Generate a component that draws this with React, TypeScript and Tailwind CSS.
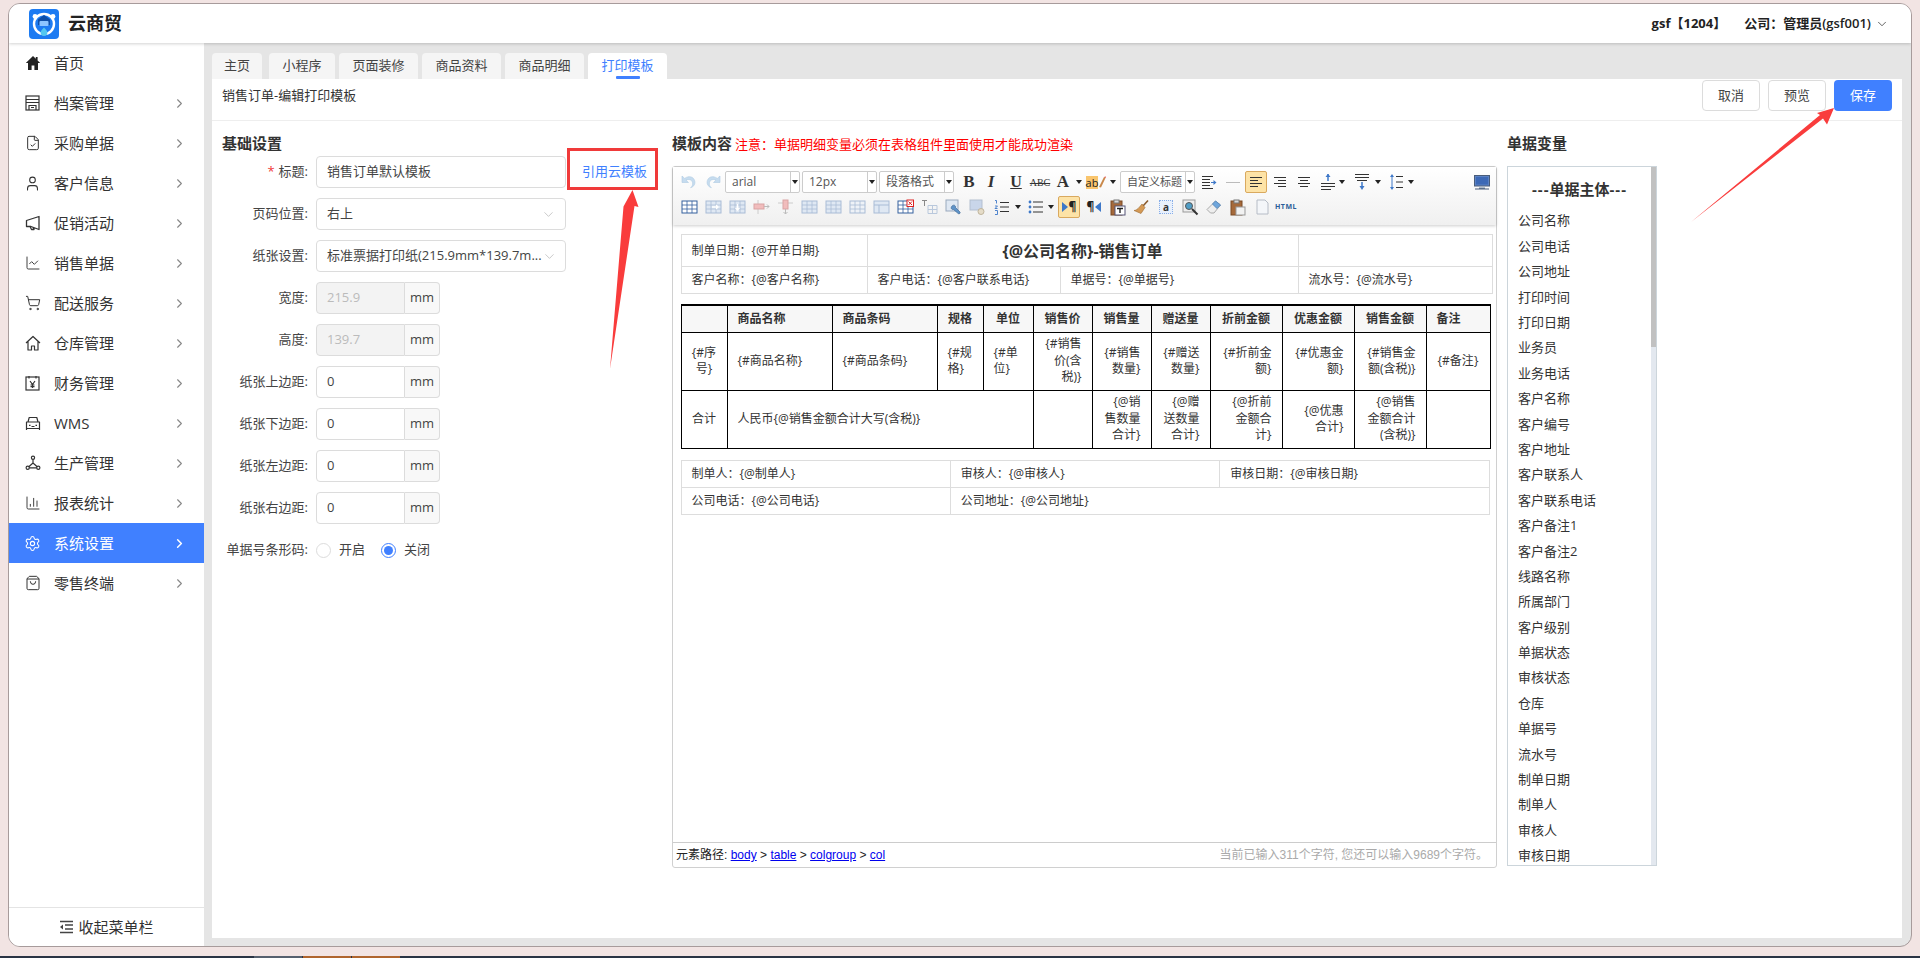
import type { ReactNode } from 'react';
import {
  ChevronDown,
  ChevronRight,
  ChartColumn,
  ChartLine,
  FileCheck,
  Settings,
  ShoppingBag,
  ShoppingCart,
  User,
} from 'lucide-react';

// full-width colon used by the page's labels
const C = '\uFF1A';

const menu: { label: string; icon: ReactNode; active?: boolean; noArrow?: boolean }[] = [
  { label: '首页', icon: <HomeIcon />, noArrow: true },
  { label: '档案管理', icon: <StoreIcon /> },
  { label: '采购单据', icon: <FileCheck size={16} strokeWidth={1.5} /> },
  { label: '客户信息', icon: <User size={17} strokeWidth={1.5} /> },
  { label: '促销活动', icon: <HornIcon /> },
  { label: '销售单据', icon: <ChartLine size={16} strokeWidth={1.4} /> },
  { label: '配送服务', icon: <ShoppingCart size={16} strokeWidth={1.5} /> },
  { label: '仓库管理', icon: <HouseIcon /> },
  { label: '财务管理', icon: <YenIcon /> },
  { label: 'WMS', icon: <CarIcon /> },
  { label: '生产管理', icon: <NodesIcon /> },
  { label: '报表统计', icon: <ChartColumn size={16} strokeWidth={1.4} /> },
  { label: '系统设置', icon: <Settings size={17} strokeWidth={1.5} />, active: true },
  { label: '零售终端', icon: <ShoppingBag size={16} strokeWidth={1.5} /> },
];

const tabs = ['主页', '小程序', '页面装修', '商品资料', '商品明细', '打印模板'];

const variables = [
  '公司名称', '公司电话', '公司地址', '打印时间', '打印日期', '业务员', '业务电话', '客户名称', '客户编号',
  '客户地址', '客户联系人', '客户联系电话', '客户备注1', '客户备注2', '线路名称', '所属部门', '客户级别',
  '单据状态', '审核状态', '仓库', '单据号', '流水号', '制单日期', '制单人', '审核人', '审核日期',
];

function HomeIcon() {
  return (
    <svg width="16" height="16" viewBox="0 0 16 16" fill="#222">
      <path d="M8 1 .8 8h2.2v7h3.6v-4.6h2.8V15H13V8h2.2L12.6 5.4V2h-1.8v1.7z" />
    </svg>
  );
}
function StoreIcon() {
  return (
    <svg width="15" height="16" viewBox="0 0 15 16" fill="none" stroke="#333" strokeWidth="1.2">
      <rect x="1" y="1" width="13" height="14" />
      <path d="M1 4.5h13M1 7.5h13M4 15v-4.5h7V15M6 12.5h3" />
    </svg>
  );
}
function HornIcon() {
  return (
    <svg width="16" height="16" viewBox="0 0 16 16" fill="none" stroke="#333" strokeWidth="1.3" strokeLinejoin="round">
      <path d="M14 1.5v13L6 11.5H1.5v-6L14 1.5zM5 11.5l1.5 3h2.5l-.8-2" />
    </svg>
  );
}
function HouseIcon() {
  return (
    <svg width="16" height="16" viewBox="0 0 16 16" fill="none" stroke="#333" strokeWidth="1.2" strokeLinejoin="round">
      <path d="M1 8 8 1.5 15 8M3 6.5V15h3.5v-4h3v4H13V6.5" />
    </svg>
  );
}
function YenIcon() {
  return (
    <svg width="15" height="16" viewBox="0 0 15 16" fill="none" stroke="#333" strokeWidth="1.2">
      <rect x="1" y="2" width="13" height="13" />
      <path d="M4 1v2.5M11 1v2.5M5 6l2.5 3.5L10 6M7.5 9.5V13M5.5 10h4M5.5 11.7h4" />
    </svg>
  );
}
function CarIcon() {
  return (
    <svg width="16" height="16" viewBox="0 0 16 16" fill="none" stroke="#333" strokeWidth="1.2" strokeLinejoin="round">
      <path d="M3 7 4.2 2.5h7.6L13 7M1.5 7h13v6.5h-13zM1.5 13.5V15M14.5 13.5V15M4 10.3h1.5M10.5 10.3H12M6.5 11.5h3" />
    </svg>
  );
}
function NodesIcon() {
  return (
    <svg width="16" height="16" viewBox="0 0 16 16" fill="none" stroke="#333" strokeWidth="1.2">
      <circle cx="8" cy="2.8" r="1.6" />
      <circle cx="2.7" cy="12.8" r="1.6" />
      <circle cx="13.3" cy="12.8" r="1.6" />
      <path d="M8 4.4V8M8 8l-4.2 3.7M8 8l4.2 3.7M4.3 12.8h7.4" />
    </svg>
  );
}

function Logo() {
  return (
    <svg width="30" height="30" viewBox="0 0 30 30">
      <rect width="30" height="30" rx="4" fill="#1d7bf2" />
      <circle cx="15" cy="15" r="10" fill="none" stroke="#fff" strokeWidth="2.4" />
      <circle cx="6" cy="7.5" r="2.4" fill="#fff" />
      <circle cx="24" cy="7.5" r="2.4" fill="#fff" />
      <path d="M9 10.5 15 6l6 4.5v5.5H9z" fill="#0f4fa8" />
      <rect x="10.5" y="12" width="9" height="5" rx="1" fill="#8cc4ff" />
      <path d="M15 18.5c2 2 3.4 3.4 3.4 5a3.4 3.4 0 0 1-6.8 0c0-1.6 1.4-3 3.4-5z" fill="#53c7f0" />
    </svg>
  );
}

/* --- editor toolbar icons --- */
function Lines({ rows, color = '#333', children }: { rows: [number, number, number][]; color?: string; children?: ReactNode }) {
  return (
    <svg width="16" height="16" viewBox="0 0 16 16" stroke={color} strokeWidth="1.1">
      {rows.map(([a, b, y]) => (
        <path key={a + '-' + b + '-' + y} d={'M' + a + ' ' + y + '.5H' + b} />
      ))}
      {children}
    </svg>
  );
}
function Caret() {
  return <span className="h-0 w-0 border-x-[3px] border-t-[4px] border-x-transparent border-t-[#222]" />;
}
function Arrow({ flip }: { flip?: boolean }) {
  return (
    <svg width="16" height="16" viewBox="0 0 16 16" className={flip ? '-scale-x-100' : ''}>
      <path d="M1 2v6.5h6.5L5 6.2c2.6-1.6 6-.4 6.6 2.5.4 2-.4 3.6-2 5 3.6-1 5-4.2 4-7.2C12.4 2.6 7.8 1.4 3.7 4.4z" fill="#c6dcef" stroke="#aecbe2" strokeWidth=".6" />
    </svg>
  );
}
function Grid({ color = '#a9bcd6', fill = '#dfe8f3', extra }: { color?: string; fill?: string; extra?: ReactNode }) {
  return (
    <svg width="17" height="16" viewBox="0 0 17 16" fill="none">
      <rect x="1" y="2" width="15" height="12" fill={fill} stroke={color} />
      <path d="M1 6h15M1 10h15M6 2v12M11 2v12" stroke={color} strokeWidth=".8" />
      {extra}
    </svg>
  );
}
function Combo({ text, className = '' }: { text: string; className?: string }) {
  return (
    <div className={'flex h-[22px] w-[75px] shrink-0 items-center rounded-[2px] border border-[#ccc] bg-white text-[12px] text-[#555] ' + className}>
      <span className="flex-1 overflow-hidden whitespace-nowrap pl-[6px]">{text}</span>
      <span className="flex h-full w-[9px] items-center justify-center border-l border-[#ccc]">
        <Caret />
      </span>
    </div>
  );
}
function Slot({ w, children, className = '' }: { w: string; children?: ReactNode; className?: string }) {
  return <span className={'flex shrink-0 items-center justify-center ' + w + ' ' + className}>{children}</span>;
}
function Active({ children, className = '' }: { children: ReactNode; className?: string }) {
  return (
    <span className={'flex h-[22px] w-[22px] shrink-0 items-center justify-center rounded-[2px] border border-[#d9a95f] bg-[#fde3a7] ' + className}>
      {children}
    </span>
  );
}
const serif = "text-[#333] [font-family:'Liberation_Serif',serif]";

function Toolbar() {
  return (
    <div className="relative flex h-[58px] shrink-0 flex-col bg-gradient-to-b from-white to-[#f0f0f0] pl-[4px] shadow-[0_1px_3px_rgba(0,0,0,.2)]">
      <div className="mt-[4px] flex h-[22px] items-center pr-[2px]">
        <Slot w="w-[24px]"><Arrow /></Slot>
        <Slot w="w-[24px]"><Arrow flip /></Slot>
        <Combo text="arial" />
        <Combo text="12px" className="ml-[2px]" />
        <Combo text="段落格式" className="ml-[2px]" />
        <Slot w="w-[22px]" className={'ml-[4px] text-[17px] leading-[22px] font-bold ' + serif}>B</Slot>
        <Slot w="w-[22px]" className={'text-[17px] leading-[22px] font-bold italic ' + serif}>I</Slot>
        <Slot w="w-[28px]" className={'text-[16px] leading-[22px] font-bold underline ' + serif}>U</Slot>
        <Slot w="w-[20px]" className={'text-[10px] line-through ' + serif}>ABC</Slot>
        <Slot w="w-[26px]" className={'text-[17px] leading-[22px] font-bold ' + serif}>A</Slot>
        <Slot w="w-[6px]"><Caret /></Slot>
        <Slot w="w-[28px]">
          <span className="bg-[#f9c56d] text-[11px] leading-[13px] text-[#222]">ab</span>
          <svg width="8" height="14" viewBox="0 0 8 14"><path d="M1 12 6 2l1.5 1L3 12.5z" fill="#c9884a" /><path d="M6 2l1.5 1 .5-1.5z" fill="#d33" /></svg>
        </Slot>
        <Slot w="w-[6px]"><Caret /></Slot>
        <Combo text="自定义标题" className="ml-[4px] !text-[11px]" />
        <Slot w="w-[28px]">
          <Lines rows={[[1, 12, 2], [1, 9, 5], [1, 9, 8], [1, 9, 11], [1, 12, 14]]}>
            <path d="M10 8.5h3" stroke="#3e78c8" /><path d="M12.5 6v5l3-2.5z" fill="#3e78c8" stroke="none" />
          </Lines>
        </Slot>
        <Slot w="w-[20px]"><Lines color="#bbb" rows={[[1, 15, 8]]} /></Slot>
        <Active className="ml-[2px]"><Lines rows={[[2, 14, 3], [2, 10, 6], [2, 14, 9], [2, 10, 12]]} /></Active>
        <Slot w="w-[26px]"><Lines rows={[[2, 14, 3], [6, 14, 6], [2, 14, 9], [6, 14, 12]]} /></Slot>
        <Slot w="w-[22px]"><Lines rows={[[2, 14, 3], [4, 12, 6], [2, 14, 9], [4, 12, 12]]} /></Slot>
        <Slot w="w-[22px]" className="ml-[2px]">
          <svg width="16" height="18" viewBox="0 0 16 18" stroke="#333"><path d="M8 1v7" stroke="#3e78c8" strokeWidth="1.5" /><path d="M5.5 4 8 .8 10.5 4z" fill="#3e78c8" stroke="none" /><path d="M1 10.5h14M1 13.5h14M1 16.5h10" /></svg>
        </Slot>
        <Slot w="w-[6px]"><Caret /></Slot>
        <Slot w="w-[27px]" className="ml-[3px]">
          <svg width="16" height="18" viewBox="0 0 16 18" stroke="#333"><path d="M1 1.5h14M1 4.5h14M3 7.5h10" /><path d="M8 9v6" stroke="#3e78c8" strokeWidth="1.5" /><path d="M5.5 13 8 17l2.5-4z" fill="#3e78c8" stroke="none" /></svg>
        </Slot>
        <Slot w="w-[6px]"><Caret /></Slot>
        <Slot w="w-[25px]" className="ml-[2px]">
          <svg width="16" height="18" viewBox="0 0 16 18" stroke="#333"><path d="M2 4 4 1l2 3zM2 14l2 3 2-3z" fill="#3e78c8" stroke="none" /><path d="M4 4v10" stroke="#3e78c8" strokeWidth="1" /><path d="M8 3.5h7M8 9h7M8 14.5h7" stroke="#333" /></svg>
        </Slot>
        <Slot w="w-[6px]"><Caret /></Slot>
        <Slot w="w-[24px]" className="ml-auto">
          <svg width="16" height="15" viewBox="0 0 16 15"><rect x=".5" y=".5" width="15" height="10.5" fill="#5b82c4" stroke="#4a5d7a" /><rect x="2" y="2" width="12" height="7.5" fill="#3d69b6" /><path d="M5 12.5h6v1.5H5z" fill="#6d8199" /><path d="M1 14h14" stroke="#4a5d7a" /></svg>
        </Slot>
      </div>
      <div className="mt-[3px] flex h-[22px] items-center">
        <Slot w="w-[24px]"><Grid color="#35609e" fill="#fff" /></Slot>
        <Slot w="w-[24px]"><Grid extra={<path d="M7 8h6M11 6l2 2-2 2" stroke="#fff" strokeWidth="1.3" />} /></Slot>
        <Slot w="w-[24px]"><Grid extra={<path d="M8.5 5v6M6.5 9l2 2 2-2" stroke="#fff" strokeWidth="1.3" />} /></Slot>
        <Slot w="w-[24px]">
          <svg width="17" height="16" viewBox="0 0 17 16" fill="none"><path d="M5 1v14" stroke="#ccc" /><rect x="1" y="5" width="10" height="5" fill="#f1bcbc" stroke="#d9a3a3" /><path d="M11 7.5h5M14 5.5l2 2-2 2" stroke="#bbb" /></svg>
        </Slot>
        <Slot w="w-[24px]">
          <svg width="17" height="16" viewBox="0 0 17 16" fill="none"><path d="M1 4h15" stroke="#ccc" /><rect x="6" y="1" width="5" height="9" fill="#f1bcbc" stroke="#d9a3a3" /><path d="M8.5 10v5M6.5 13l2 2 2-2" stroke="#bbb" /></svg>
        </Slot>
        <Slot w="w-[24px]"><Grid /></Slot>
        <Slot w="w-[24px]"><Grid /></Slot>
        <Slot w="w-[24px]"><Grid fill="#eef2f7" /></Slot>
        <Slot w="w-[24px]">
          <svg width="17" height="16" viewBox="0 0 17 16" fill="none"><rect x="1" y="2" width="15" height="12" fill="#dfe8f3" stroke="#a9bcd6" /><path d="M1 6h15M6 6v8" stroke="#a9bcd6" /></svg>
        </Slot>
        <Slot w="w-[24px]">
          <Grid color="#35609e" fill="#fff" extra={<g><rect x="10" y="1" width="6.5" height="6.5" fill="#fff" stroke="#d22" /><path d="M11.5 2.5l3.5 3.5M15 2.5 11.5 6" stroke="#d22" /></g>} />
        </Slot>
        <Slot w="w-[24px]">
          <svg width="17" height="16" viewBox="0 0 17 16" fill="none"><path d="M1 1.5h5M3.5 1.5V7" stroke="#888" /><path d="M7 6.5h9v8H7zM7 10.5h9M11.5 6.5v8" stroke="#b9c8dc" /></svg>
        </Slot>
        <Slot w="w-[24px]">
          <svg width="17" height="17" viewBox="0 0 17 17" fill="none"><rect x="1" y="1" width="12" height="11" fill="#dfe8f3" stroke="#9aa9bd" /><path d="M7 7c2-2 4 0 3.5 1.500L15 13c.8 1-.8 2.500-1.800 1.600L8.500 10.500C6.800 11 5.200 9 7 7z" fill="#5f93c8" stroke="#37618f" strokeWidth=".6" /></svg>
        </Slot>
        <Slot w="w-[24px]">
          <svg width="17" height="17" viewBox="0 0 17 17" fill="none"><rect x="1" y="1" width="12" height="10" fill="#c9d6ea" stroke="#b3bfd0" /><circle cx="12" cy="12.5" r="3" fill="#e5dcc8" stroke="#bfb49c" /></svg>
        </Slot>
        <Slot w="w-[26px]">
          <svg width="16" height="16" viewBox="0 0 16 16" fill="none"><path d="M1 1.5h1.500v3M1 7h2.500L1 9.500h2.500M1 11.500h2.500v4H1" stroke="#3e78c8" strokeWidth=".9" /><path d="M6 3.500h9M6 8h9M6 12.500h9" stroke="#333" /></svg>
        </Slot>
        <Slot w="w-[6px]"><Caret /></Slot>
        <Slot w="w-[24px]" className="ml-[3px]">
          <svg width="16" height="16" viewBox="0 0 16 16" fill="none"><circle cx="2" cy="3" r="1.4" fill="#3e78c8" /><circle cx="2" cy="8" r="1.4" fill="#3e78c8" /><circle cx="2" cy="13" r="1.4" fill="#3e78c8" /><path d="M5 3h10M5 8h10M5 13h10" stroke="#333" /></svg>
        </Slot>
        <Slot w="w-[6px]"><Caret /></Slot>
        <Active className="ml-[4px] text-[12px] font-bold text-[#222]">
          <span className="mr-[1px] h-0 w-0 border-y-[5px] border-l-[6px] border-y-transparent border-l-[#3e78c8]" />¶
        </Active>
        <Slot w="w-[28px]" className="text-[12px] font-bold text-[#222]">
          ¶<span className="ml-[1px] h-0 w-0 border-y-[5px] border-r-[6px] border-y-transparent border-r-[#3e78c8]" />
        </Slot>
        <Slot w="w-[20px]">
          <svg width="16" height="17" viewBox="0 0 16 17" fill="none"><rect x="1" y="2" width="11" height="14" fill="#a5693a" stroke="#7a4a24" /><rect x="4" y="1" width="5" height="3" fill="#d8d8d8" stroke="#777" /><rect x="5" y="7" width="10" height="9" fill="#fff" stroke="#557" /><path d="M7 9.5h6M10 9.5V14" stroke="#222" strokeWidth="1.4" /></svg>
        </Slot>
        <Slot w="w-[26px]">
          <svg width="17" height="16" viewBox="0 0 17 16" fill="none"><path d="M10 7 15 1.5" stroke="#8a5a2b" strokeWidth="1.6" /><path d="M9 5 12 8.5 8 14.5 1 11.5c3 0 5.5-3.5 8-6.5z" fill="#d59a55" stroke="#9c6a30" strokeWidth=".6" /></svg>
        </Slot>
        <Slot w="w-[24px]">
          <span className="flex h-[14px] w-[14px] items-center justify-center border border-dotted border-[#88aee8] bg-[#e8f0fc] text-[10px] font-bold text-[#333]">a</span>
        </Slot>
        <Slot w="w-[24px]">
          <svg width="17" height="17" viewBox="0 0 17 17" fill="none"><rect x="1" y="1" width="12" height="12" fill="#eee" stroke="#999" /><circle cx="7" cy="7" r="3.5" fill="#4f9dc6" stroke="#555" /><path d="M10 10l5.5 5.5" stroke="#333" strokeWidth="2" /></svg>
        </Slot>
        <Slot w="w-[24px]">
          <svg width="16" height="16" viewBox="0 0 16 16"><path d="M1 10.5 9.5 2 14.5 6 8 14H4.5z" fill="#eee" stroke="#aaa" /><path d="M6.5 5 9.5 2 14.5 6 11 9.5z" fill="#6fa6dc" stroke="#5d8dbd" /></svg>
        </Slot>
        <Slot w="w-[24px]">
          <svg width="16" height="17" viewBox="0 0 16 17" fill="none"><rect x="1" y="2" width="11" height="14" fill="#a5693a" stroke="#7a4a24" /><rect x="4" y="1" width="5" height="3" fill="#d8d8d8" stroke="#777" /><rect x="6" y="8" width="9" height="8" fill="#f2f2f2" stroke="#999" /></svg>
        </Slot>
        <Slot w="w-[24px]">
          <svg width="13" height="16" viewBox="0 0 13 16"><path d="M1 1h8l3 3v11H1z" fill="#f4f6f9" stroke="#b6bcc6" /></svg>
        </Slot>
        <Slot w="w-[24px]" className="text-[7px] font-bold tracking-[.5px] text-[#2b5d98]">HTML</Slot>
      </div>
    </div>
  );
}

/* --- print template --- */
function Gray({ className = '', children, colSpan }: { className?: string; children?: ReactNode; colSpan?: number }) {
  return (
    <td colSpan={colSpan} className={'border border-[#ddd] px-[10px] text-[12px] text-[#333] ' + className}>
      {children}
    </td>
  );
}
function Cell({ className = '', children, colSpan }: { className?: string; children?: ReactNode; colSpan?: number }) {
  return (
    <td colSpan={colSpan} className={'border border-black px-[10px] text-[12px] leading-[16.4px] text-[#333] ' + className}>
      {children}
    </td>
  );
}
const heads = ['', '商品名称', '商品条码', '规格', '单位', '销售价', '销售量', '赠送量', '折前金额', '优惠金额', '销售金额', '备注'];
const colWidths = ['w-[46px]', 'w-[105px]', 'w-[105px]', 'w-[46px]', 'w-[50px]', 'w-[59px]', 'w-[59px]', 'w-[59px]', 'w-[72px]', 'w-[72px]', 'w-[72px]', 'w-[64px]'];

function Template() {
  return (
    <div className="flex-1 overflow-hidden bg-white pl-[7.5px] pt-[9px]">
      <table className="w-[811px] table-fixed border-collapse">
        <colgroup>
          <col className="w-[186px]" />
          <col className="w-[193px]" />
          <col className="w-[238px]" />
          <col className="w-[194px]" />
        </colgroup>
        <tbody>
          <tr className="h-[32px]">
            <Gray>制单日期{C}{'{'}@开单日期{'}'}</Gray>
            <Gray colSpan={2} className="text-center !text-[16px] font-bold">{'{'}@公司名称{'}'}-销售订单</Gray>
            <Gray />
          </tr>
          <tr className="h-[27px]">
            <Gray>客户名称{C}{'{'}@客户名称{'}'}</Gray>
            <Gray>客户电话{C}{'{'}@客户联系电话{'}'}</Gray>
            <Gray>单据号{C}{'{'}@单据号{'}'}</Gray>
            <Gray>流水号{C}{'{'}@流水号{'}'}</Gray>
          </tr>
        </tbody>
      </table>
      <table className="mt-[10px] w-[809px] table-fixed border-collapse">
        <colgroup>
          {colWidths.map((w, i) => (
            <col key={i} className={w} />
          ))}
        </colgroup>
        <tbody>
          <tr className="h-[27px] bg-[#f7f7f7]">
            {heads.map((h, i) => (
              <td key={i} className={'border border-t-2 border-black px-[10px] text-[12px] font-bold text-[#333] ' + (i === 0 || i === 1 || i === 2 || i === 11 ? 'text-left' : 'text-center')}>
                {h}
              </td>
            ))}
          </tr>
          <tr className="h-[58px]">
            <Cell className="text-center">{'{'}#序<br />号{'}'}</Cell>
            <Cell>{'{'}#商品名称{'}'}</Cell>
            <Cell>{'{'}#商品条码{'}'}</Cell>
            <Cell>{'{'}#规<br />格{'}'}</Cell>
            <Cell>{'{'}#单<br />位{'}'}</Cell>
            <Cell className="text-right">{'{'}#销售<br />价(含<br />税){'}'}</Cell>
            <Cell className="text-right">{'{'}#销售<br />数量{'}'}</Cell>
            <Cell className="text-right">{'{'}#赠送<br />数量{'}'}</Cell>
            <Cell className="text-right">{'{'}#折前金<br />额{'}'}</Cell>
            <Cell className="text-right">{'{'}#优惠金<br />额{'}'}</Cell>
            <Cell className="text-right">{'{'}#销售金<br />额(含税){'}'}</Cell>
            <Cell className="text-center">{'{'}#备注{'}'}</Cell>
          </tr>
          <tr className="h-[58px]">
            <Cell className="text-center">合计</Cell>
            <Cell colSpan={4}>人民币{'{'}@销售金额合计大写(含税){'}'}</Cell>
            <Cell />
            <Cell className="text-right">{'{'}@销<br />售数量<br />合计{'}'}</Cell>
            <Cell className="text-right">{'{'}@赠<br />送数量<br />合计{'}'}</Cell>
            <Cell className="text-right">{'{'}@折前<br />金额合<br />计{'}'}</Cell>
            <Cell className="text-right">{'{'}@优惠<br />合计{'}'}</Cell>
            <Cell className="text-right">{'{'}@销售<br />金额合计<br />(含税){'}'}</Cell>
            <Cell />
          </tr>
        </tbody>
      </table>
      <table className="mt-[11px] w-[809px] table-fixed border-collapse">
        <tbody>
          <tr className="h-[27px]">
            <Gray>制单人{C}{'{'}@制单人{'}'}</Gray>
            <Gray>审核人{C}{'{'}@审核人{'}'}</Gray>
            <Gray>审核日期{C}{'{'}@审核日期{'}'}</Gray>
          </tr>
          <tr className="h-[27px]">
            <Gray>公司电话{C}{'{'}@公司电话{'}'}</Gray>
            <Gray colSpan={2}>公司地址{C}{'{'}@公司地址{'}'}</Gray>
          </tr>
        </tbody>
      </table>
    </div>
  );
}

/* --- left form --- */
function Row({ label, required, children }: { label: string; required?: boolean; children: ReactNode }) {
  return (
    <div className="mb-[10px] flex h-[32px] items-center">
      <label className="mr-[8px] w-[86px] shrink-0 whitespace-nowrap text-right text-[13px] text-[#444]">
        {required && <span className="mr-[4px] text-[#f03a3a]">*</span>}
        {label}:
      </label>
      {children}
    </div>
  );
}
function Unit({ value, disabled }: { value: string; disabled?: boolean }) {
  return (
    <div className="flex h-[32px] text-[13px]">
      <div className={'flex h-full w-[89px] items-center rounded-l-[4px] border border-[#dcdcdc] pl-[10px] ' + (disabled ? 'bg-[#f3f3f3] text-[#bbb]' : 'bg-white text-[#444]')}>
        {value}
      </div>
      <div className="flex h-full w-[35px] items-center justify-center rounded-r-[4px] border border-l-0 border-[#dcdcdc] bg-[#f8f8f8] text-[#444]">
        mm
      </div>
    </div>
  );
}
function Select({ value }: { value: string }) {
  return (
    <div className="flex h-[32px] w-[250px] items-center justify-between rounded-[4px] border border-[#dcdcdc] bg-white pl-[10px] pr-[9px] text-[13px] text-[#444]">
      <span className="whitespace-nowrap">{value}</span>
      <ChevronDown size={15} strokeWidth={1} className="shrink-0 text-[#aaa]" />
    </div>
  );
}

export default function App() {
  return (
    <div className="relative flex h-[958px] w-[1920px] flex-col overflow-hidden bg-[#f2e4e3] px-[8px] pt-[3px] text-[#333] [font-family:'Open_Sans','Noto_Sans_CJK_SC',sans-serif]">
      <div className="flex h-[944px] shrink-0 flex-col overflow-hidden rounded-[12px] border border-[#a79b9b] bg-[#e5e5e5]">
        <header className="relative z-10 flex h-[39px] shrink-0 items-center bg-white pl-[20px] pr-[22px] shadow-[0_1px_3px_rgba(0,0,0,.18)]">
          <Logo />
          <span className="ml-[9px] text-[18px] font-bold text-[#222]">云商贸</span>
          <span className="ml-auto text-[13px] font-bold text-[#222]">gsf【1204】</span>
          <span className="ml-[18px] text-[13px] font-semibold text-[#222]">公司{C}管理员(gsf001)</span>
          <ChevronDown size={14} strokeWidth={1.2} className="ml-[4px] text-[#222]" />
        </header>

        <div className="flex min-h-0 flex-1">
          <aside className="flex w-[195px] shrink-0 flex-col bg-white">
            <nav className="flex-1">
              {menu.map((m) => (
                <div key={m.label} className={'flex h-[40px] items-center pl-[15px] pr-[17px] text-[15px] ' + (m.active ? 'bg-[#4080ff] text-white' : 'text-[#333]')}>
                  <span className="flex w-[17px] justify-center">{m.icon}</span>
                  <span className="ml-[13px] flex-1">{m.label}</span>
                  {!m.noArrow && <ChevronRight size={15} strokeWidth={m.active ? 2.4 : 1.8} className={m.active ? 'text-white' : 'text-[#888]'} />}
                </div>
              ))}
            </nav>
            <div className="flex h-[39px] shrink-0 items-center justify-center border-t border-[#e4e4e4] text-[15px] text-[#333]">
              <svg width="15" height="14" viewBox="0 0 15 14" stroke="#444" strokeWidth="1.3" className="mr-[4px]">
                <path d="M1 1.5h13M6 5h8M6 9h8M1 12.5h13" />
                <path d="M4 4.5 1 7l3 2.5z" fill="#444" stroke="none" />
              </svg>
              收起菜单栏
            </div>
          </aside>

          <main className="flex min-w-0 flex-1 flex-col pb-[8px] pl-[8px] pr-[9px] pt-[10px]">
            <div className="flex h-[26px] shrink-0 gap-[4px] text-[13px] text-[#444]">
              {tabs.map((t, i) => (
                <div
                  key={t}
                  className={
                    'relative flex items-center justify-center rounded-t-[4px] ' +
                    (i === 0 ? 'w-[50px] ' : i === 1 ? 'ml-[3px] w-[66px] ' : 'w-[79px] ') +
                    (i === 5 ? 'bg-white text-[#4080ff]' : 'bg-[#f5f5f5]')
                  }
                >
                  {t}
                  {i === 5 && <span className="absolute bottom-0 left-[28px] h-[3px] w-[24px] rounded-[1px] bg-[#4080ff]" />}
                </div>
              ))}
            </div>

            <section className="flex min-h-0 flex-1 flex-col bg-white">
              <div className="flex h-[42px] shrink-0 border-b border-[#eee] pl-[10px] pr-[10px]">
                <h1 className="pt-[7px] text-[13px] text-[#333]">销售订单-编辑打印模板</h1>
                <button className="ml-auto mt-[1px] h-[31px] w-[58px] rounded-[4px] border border-[#dcdcdc] bg-white text-[13px] text-[#444]">取消</button>
                <button className="ml-[8px] mt-[1px] h-[31px] w-[58px] rounded-[4px] border border-[#dcdcdc] bg-white text-[13px] text-[#444]">预览</button>
                <button className="ml-[8px] mt-[1px] h-[31px] w-[58px] rounded-[4px] bg-[#4080ff] text-[13px] text-white">保存</button>
              </div>

              <div className="flex pl-[10px] pt-[12px]">
                <div className="w-[450px] shrink-0">
                  <h2 className="h-[20px] text-[15px] font-bold leading-[20px] text-[#333]">基础设置</h2>
                  <div className="mt-[3px]">
                    <Row label="标题" required>
                      <div className="flex h-[32px] w-[250px] items-center rounded-[4px] border border-[#dcdcdc] pl-[10px] text-[13px] text-[#444]">销售订单默认模板</div>
                      <a className="ml-[16px] text-[13px] text-[#4080ff]">引用云模板</a>
                    </Row>
                    <Row label="页码位置"><Select value="右上" /></Row>
                    <Row label="纸张设置"><Select value="标准票据打印纸(215.9mm*139.7m..." /></Row>
                    <Row label="宽度"><Unit value="215.9" disabled /></Row>
                    <Row label="高度"><Unit value="139.7" disabled /></Row>
                    <Row label="纸张上边距"><Unit value="0" /></Row>
                    <Row label="纸张下边距"><Unit value="0" /></Row>
                    <Row label="纸张左边距"><Unit value="0" /></Row>
                    <Row label="纸张右边距"><Unit value="0" /></Row>
                    <Row label="单据号条形码">
                      <span className="h-[15px] w-[15px] rounded-full border border-[#dcdcdc]" />
                      <span className="ml-[8px] text-[13px] text-[#444]">开启</span>
                      <span className="ml-[16px] flex h-[15px] w-[15px] items-center justify-center rounded-full border border-[#4080ff]">
                        <span className="h-[9px] w-[9px] rounded-full bg-[#4080ff]" />
                      </span>
                      <span className="ml-[8px] text-[13px] text-[#444]">关闭</span>
                    </Row>
                  </div>
                </div>

                <div className="w-[825px] shrink-0">
                  <h2 className="h-[20px] whitespace-nowrap leading-[20px]">
                    <span className="text-[15px] font-bold text-[#333]">模板内容</span>
                    <span className="ml-[3px] text-[13px] text-[#ff0000]">注意{C}单据明细变量必须在表格组件里面使用才能成功渲染</span>
                  </h2>
                  <div className="mt-[13px] flex h-[702px] flex-col rounded-[3px] border border-[#d0d0d0]">
                    <Toolbar />
                    <Template />
                    <div className="flex h-[25px] shrink-0 items-center justify-between border-t border-[#ccc] pl-[3px] pr-[2px] text-[12px] [font-family:'Liberation_Sans','Noto_Sans_CJK_SC',sans-serif]">
                      <span className="text-[#222]">
                        元素路径: <a className="text-[#0000ee] underline">body</a> &gt; <a className="text-[#0000ee] underline">table</a> &gt; <a className="text-[#0000ee] underline">colgroup</a> &gt; <a className="text-[#0000ee] underline">col</a>
                      </span>
                      <span className="pr-[6px] text-[#aaa]">当前已输入311个字符, 您还可以输入9689个字符。</span>
                    </div>
                  </div>
                </div>

                <div className="ml-[10px] w-[150px] shrink-0">
                  <h2 className="h-[20px] text-[15px] font-bold leading-[20px] text-[#333]">单据变量</h2>
                  <div className="mt-[13px] flex h-[700px] overflow-hidden border border-[#ccd5db]">
                    <div className="flex-1 overflow-hidden pl-[10px]">
                      <div className="-ml-[10px] mb-[9.5px] mt-[12px] text-center text-[15px] font-bold leading-[20px] text-[#333]">
                        <span className="tracking-[1px]">---</span>单据主体<span className="tracking-[1px]">---</span>
                      </div>
                      {variables.map((v) => (
                        <div key={v} className="flex h-[25.4px] items-center whitespace-nowrap text-[13px] text-[#333]">{v}</div>
                      ))}
                    </div>
                    <div className="w-[5px] shrink-0 bg-[#e3e8ef]">
                      <div className="h-[180px] bg-[#c1c1c1]" />
                    </div>
                  </div>
                </div>
              </div>
            </section>
          </main>
        </div>
      </div>

      <div className="-mx-[8px] mt-auto flex h-[2px] shrink-0 bg-[#2a3444] pl-[254px]">
        <span className="w-[48px] bg-[#56606e]" />
        <span className="ml-[1px] w-[48px] bg-[#b0652e]" />
        <span className="ml-[1px] w-[48px] bg-[#b0652e]" />
      </div>

      {/* annotations painted over the screenshot */}
      <div className="pointer-events-none absolute left-[567px] top-[148px] h-[42px] w-[91px] border-[3px] border-[#f03a3a]" />
      <svg className="pointer-events-none absolute left-0 top-0" width="1920" height="958" viewBox="0 0 1920 958">
        <path d="M632.5 190 638.5 207 634.5 206 610 369 623.5 206.5z" fill="#f93c3c" />
        <path d="M1834 108 1827 124.5 1823 118.5 1691 222 1820 115 1817 113z" fill="#f93c3c" />
      </svg>
    </div>
  );
}
